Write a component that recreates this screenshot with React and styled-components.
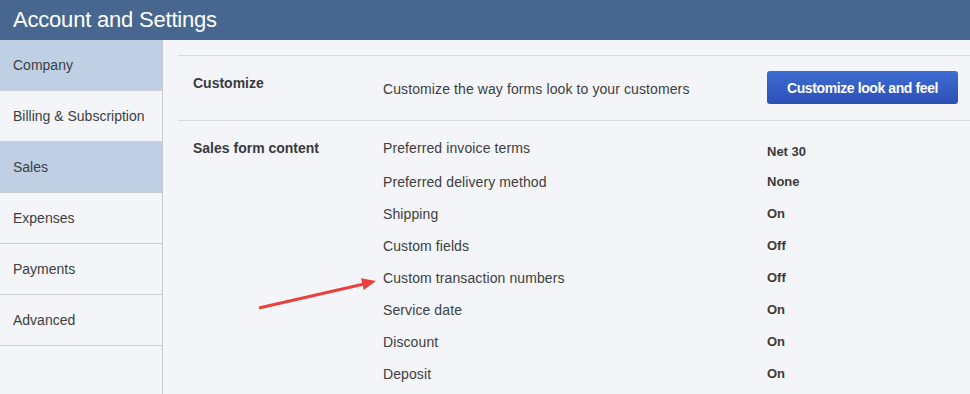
import styled, { createGlobalStyle } from 'styled-components';

// stili globali della pagina
const GlobalStyle = createGlobalStyle`
    html, body {
        margin: 0;
        padding: 0;
        height: 100%;
        overflow: hidden;
        background-color: #f3f5f9;
        font-family: "Liberation Sans", Arial, sans-serif;
    }
    #root {
        height: 100%;
    }
`

const Page = styled.div`
    position: relative;
    height: 100%;
    display: flex;
    flex-direction: column;
`
const Header = styled.div`
    height: 40px;
    flex-shrink: 0;
    background-color: #476790;
    display: flex;
    align-items: center;
    padding: 0 13px;
`
const Title = styled.h1`
    margin: 0;
    color: #fff;
    font-size: 22px;
    font-weight: normal;
    letter-spacing: -0.2px;
`
const Body = styled.div`
    flex: 1;
    display: flex;
`
const Sidebar = styled.nav`
    width: 162px;
    flex-shrink: 0;
    border-right: 1px solid #c8ccd2;
    background-color: #f3f5f9;
`
const NavItem = styled.div`
    height: 50px;
    border-bottom: 1px solid #c8ccd2;
    display: flex;
    align-items: center;
    padding: 0 13px;
    font-size: 14px;
    color: #3d3e41;
    background-color: ${props => props.$active ? '#bfd0e5' : 'transparent'};
    cursor: pointer;
`
const Content = styled.main`
    flex: 1;
    padding: 15px 0 0 15px;
`
const Section = styled.section`
    display: grid;
    grid-template-columns: 190px 384px 1fr;
    align-items: ${props => props.$center ? 'center' : 'start'};
    border-top: 1px solid #d8dade;
    padding: ${props => props.$pad};
    padding-left: 15px;
`
const SectionLabel = styled.div`
    font-size: 14px;
    font-weight: bold;
    color: #393a3d;
    line-height: 20px;
    align-self: start;
    margin-top: ${props => props.$top || 0}px;
`
const Description = styled.div`
    font-size: 14px;
    color: #3d3e41;
    letter-spacing: 0.1px;
    margin-top: 2px;
`
const Button = styled.button`
    width: 191px;
    height: 33px;
    border: none;
    border-radius: 3px;
    background: linear-gradient(#3d6dd3, #2c4fb6);
    color: #fff;
    font-family: inherit;
    font-size: 14px;
    font-weight: bold;
    letter-spacing: -0.4px;
    cursor: pointer;
`
const List = styled.div`
    grid-column: 2 / 4;
    display: flex;
    flex-direction: column;
`
const Row = styled.div`
    height: 32px;
    display: grid;
    grid-template-columns: 384px 1fr;
    align-items: center;
`
const RowLabel = styled.div`
    font-size: 14px;
    color: #3d3e41;
    letter-spacing: 0.1px;
    margin-top: ${props => props.$shift || 0}px;
`
const RowValue = styled.div`
    font-size: 13px;
    font-weight: bold;
    color: #393a3d;
    margin-top: ${props => props.$shift || 0}px;
`
const Arrow = styled.svg`
    position: absolute;
    left: 255px;
    top: 275px;
    width: 125px;
    height: 40px;
    pointer-events: none;
`

const menu = ['Company', 'Billing & Subscription', 'Sales', 'Expenses', 'Payments', 'Advanced'];
const active = ['Company', 'Sales'];

const settings = [
    ['Preferred invoice terms', 'Net 30'],
    ['Preferred delivery method', 'None'],
    ['Shipping', 'On'],
    ['Custom fields', 'Off'],
    ['Custom transaction numbers', 'Off'],
    ['Service date', 'On'],
    ['Discount', 'On'],
    ['Deposit', 'On'],
];

export default function App() {
    return (
        <Page>
            <GlobalStyle />
            <Header>
                <Title>Account and Settings</Title>
            </Header>
            <Body>
                <Sidebar>
                    {menu.map(name => (
                        <NavItem key={name} $active={active.includes(name)}>{name}</NavItem>
                    ))}
                </Sidebar>
                <Content>
                    <Section $center $pad="15px 0 16px">
                        <SectionLabel $top={2}>Customize</SectionLabel>
                        <Description>Customize the way forms look to your customers</Description>
                        <div><Button>Customize look and feel</Button></div>
                    </Section>
                    <Section $pad="13px 0 0">
                        <SectionLabel $top={4}>Sales form content</SectionLabel>
                        <List>
                            {settings.map(([label, value], i) => (
                                <Row key={label}>
                                    <RowLabel $shift={i === 0 ? -4 : 0}>{label}</RowLabel>
                                    <RowValue $shift={i === 0 ? 3 : -1}>{value}</RowValue>
                                </Row>
                            ))}
                        </List>
                    </Section>
                </Content>
            </Body>
            <Arrow viewBox="0 0 125 40">
                <line x1="4" y1="33" x2="109" y2="9" stroke="#e8413e" strokeWidth="3" />
                <polygon points="121,6 108.7,15 106,3.3" fill="#e8413e" />
            </Arrow>
        </Page>
    )
}
